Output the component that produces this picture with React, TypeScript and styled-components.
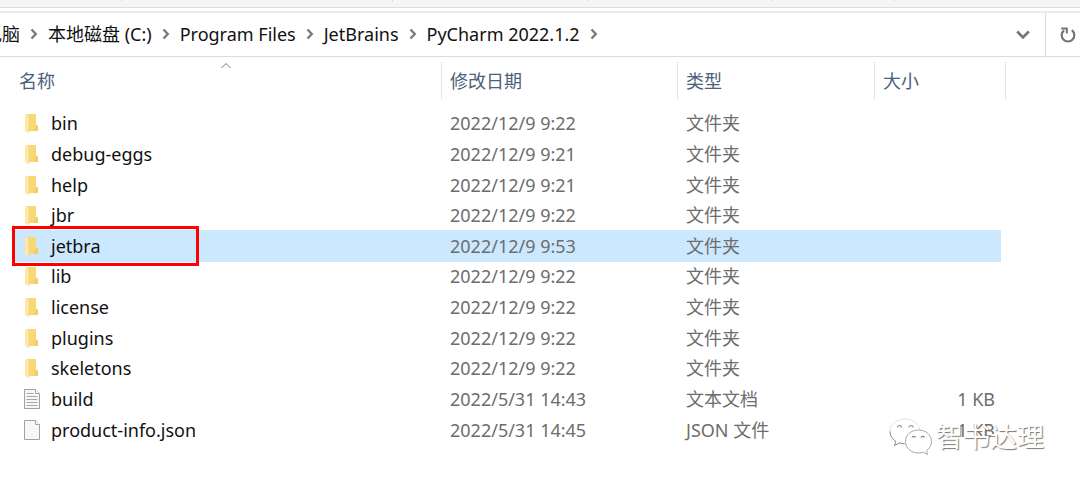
import React from "react";
import styled, { createGlobalStyle } from "styled-components";

const GlobalStyle = createGlobalStyle`
  * { box-sizing: border-box; }
  body {
    margin: 0;
    background: #fff;
    color: #111;
    font: 18px/24px "Noto Sans", "Noto Sans CJK SC", sans-serif;
  }
`;

const Window = styled.main`
  position: relative;
  overflow: hidden;
  padding-bottom: 40px;
`;

const Ribbon = styled.div`
  display: flex;
  height: 8px;
  background: #f4f5f7;
  border-bottom: 1px solid #dcdcdc;
`;

const RibbonGroup = styled.div<{ $width: number }>`
  flex: 0 0 ${(p) => p.$width}px;
  height: 2px;
  border-right: 1px solid #dcdddf;
`;

const AddressBar = styled.div`
  display: flex;
  align-items: stretch;
  height: 46px;
  margin-top: 3px;
  border-top: 2px solid #ececec;
  border-bottom: 1px solid #dadada;
`;

const Crumbs = styled.nav`
  flex: 1;
  display: flex;
  align-items: center;
  gap: 10px;
  margin-left: -16px;
  padding-bottom: 2px;
  white-space: nowrap;
`;

const Crumb = styled.a`
  color: #111;
  text-decoration: none;
`;

const IconButton = styled.button`
  display: flex;
  align-items: center;
  justify-content: center;
  width: 44px;
  padding: 0;
  border: 0;
  background: none;
  color: #757575;
`;

const RefreshButton = styled(IconButton)`
  width: 35px;
  padding-left: 10px;
  border-left: 1px solid #dadada;
`;

const FileTable = styled.table`
  width: calc(100% - 13px);
  height: 388px;
  margin-left: 13px;
  border-collapse: collapse;
  table-layout: fixed;

  th,
  td {
    padding: 0;
    text-align: left;
    font-weight: 400;
  }
`;

const HeadRow = styled.tr`
  height: 51px;
`;

const HeadCell = styled.div`
  position: relative;
  height: 37px;
  margin-bottom: 4px;
  border-right: 1px solid #e4e4e4;
`;

const SortButton = styled.button<{ $inset: number }>`
  display: block;
  width: 100%;
  height: 100%;
  padding: 0 0 0 ${(p) => p.$inset}px;
  border: 0;
  background: none;
  color: #4c607a;
  font: inherit;
  text-align: left;
`;

const SortMark = styled.svg`
  position: absolute;
  top: 0;
  left: 50%;
  margin-left: -7px;
`;

const Row = styled.tr<{ $selected: boolean }>`
  td:not(:last-child) {
    background: ${(p) => (p.$selected ? "#cce8ff" : "transparent")};
    box-shadow: ${(p) => (p.$selected ? "0 1px #cce8ff, 0 -1px #cce8ff" : "none")};
  }
`;

const FileName = styled.div`
  position: relative;
  display: flex;
  align-items: center;
  gap: 10px;
  padding-left: 10px;
`;

const MetaCell = styled.td`
  color: #6d6d6d;
`;

const Meta = styled.div<{ $align?: "right" }>`
  padding: 0 6px 0 8px;
  text-align: ${(p) => p.$align ?? "left"};
`;

const Highlight = styled.span`
  position: absolute;
  top: -8px;
  left: -1px;
  width: 187px;
  height: 40px;
  border: 3px solid #fe0000;
`;

const Watermark = styled.div`
  position: absolute;
  right: 36px;
  bottom: 28px;
  display: flex;
  align-items: center;
  gap: 4px;
  color: #fff;
  font-size: 27px;
  line-height: 40px;
  text-shadow: 1px 1px 1px #777;
`;

const Chevron = () => (
  <svg width="8" height="12" viewBox="0 0 8 12" fill="none" stroke="#7b7b7b" strokeWidth="2.4" aria-hidden>
    <path d="M1.5 1.5 5.8 6 1.5 10.5" />
  </svg>
);

const FolderIcon = () => (
  <svg width="18" height="22" viewBox="0 0 18 22" aria-hidden>
    <path d="M4 2h9v10.500l2 1.500V19H4z" fill="#f8d775" />
    <path d="M13 12.500l2 1.500V19h-4z" fill="#f1cd68" />
    <path d="M2 2 6 3.500V21L2 19z" fill="#fde9a5" />
    <path d="M6 3.500V21" stroke="#eed07c" strokeWidth=".6" />
  </svg>
);

const PageIcon = ({ lined }: { lined: boolean }) => (
  <svg width="18" height="22" viewBox="0 0 18 22" fill="none" aria-hidden>
    <path d="M1.500 1.500h11l4 4v15h-15z" fill="#f6f7f8" stroke="#a2a2a2" />
    <path d="M12.500 1.500v4h4" fill="#fff" stroke="#a2a2a2" />
    {lined && <path d="M3.500 5.500h7M3.500 8.500h11M3.500 11.500h11M3.500 14.500h11M3.500 17.500h11" stroke="#a8a8a8" />}
  </svg>
);

const WeChatLogo = () => (
  <svg width="43" height="38" viewBox="0 0 43 38" fill="#fff" stroke="#8b8b8b" aria-hidden>
    <path
      d="M16 1C7.500 1 1 6.500 1 13.500c0 4.200 2.200 7.500 5.700 9.700L5.500 27.500l5-2.500c1.800.6 3.600.8 5.500.8 8.300 0 15-5.500 15-12.300S24.500 1 16 1z"
      stroke="#e2e2e2"
    />
    <path d="M1 13.500c0 4.200 2.200 7.500 5.700 9.700L5.500 27.500l5-2.500 5 .8" />
    <path
      d="M29.500 12C22 12 16.500 17 16.500 23.500S22 35 29.500 35c1.700 0 3.200-.2 4.700-.7l4.300 2.200-1-3.800c3.200-2.200 5-5.400 5-9.200C42.500 17 37 12 29.500 12z"
      stroke="#a8a8a8"
    />
    <g fill="none" strokeWidth="1.200">
      <path d="M8.500 9.500a2 2 0 0 1 4 0M20 9.500a2 2 0 0 1 4 0M23 19.500a2 2 0 0 1 3.600 0M32 19.500a2 2 0 0 1 3.600 0" />
    </g>
  </svg>
);

type Kind = "folder" | "text" | "json";
type Entry = { name: string; date: string; kind: Kind; size?: string };

const kindLabel: Record<Kind, string> = {
  folder: "文件夹",
  text: "文本文档",
  json: "JSON 文件",
};

const entries: Entry[] = [
  { name: "bin", date: "2022/12/9 9:22", kind: "folder" },
  { name: "debug-eggs", date: "2022/12/9 9:21", kind: "folder" },
  { name: "help", date: "2022/12/9 9:21", kind: "folder" },
  { name: "jbr", date: "2022/12/9 9:22", kind: "folder" },
  { name: "jetbra", date: "2022/12/9 9:53", kind: "folder" },
  { name: "lib", date: "2022/12/9 9:22", kind: "folder" },
  { name: "license", date: "2022/12/9 9:22", kind: "folder" },
  { name: "plugins", date: "2022/12/9 9:22", kind: "folder" },
  { name: "skeletons", date: "2022/12/9 9:22", kind: "folder" },
  { name: "build", date: "2022/5/31 14:43", kind: "text", size: "1 KB" },
  { name: "product-info.json", date: "2022/5/31 14:45", kind: "json", size: "1 KB" },
];

const path = ["电脑", "本地磁盘 (C:)", "Program Files", "JetBrains", "PyCharm 2022.1.2"];
const ribbonGroups = [122, 271, 196, 184, 122];
const columnWidths = [429, 236, 197, 126, 5];
const selectedName = "jetbra";

export default function App() {
  return (
    <>
      <GlobalStyle />
      <Window>
        <Ribbon>
          {ribbonGroups.map((width, i) => (
            <RibbonGroup key={i} $width={width} />
          ))}
        </Ribbon>
        <AddressBar>
          <Crumbs aria-label="路径">
            {path.map((part) => (
              <React.Fragment key={part}>
                <Crumb href="#">{part}</Crumb>
                <Chevron />
              </React.Fragment>
            ))}
          </Crumbs>
          <IconButton aria-label="历史记录">
            <svg width="14" height="10" viewBox="0 0 14 10" fill="none" stroke="currentColor" strokeWidth="2.6">
              <path d="M1.200 1.500 7 7.300l5.800-5.800" />
            </svg>
          </IconButton>
          <RefreshButton aria-label="刷新">
            <svg width="16" height="16" viewBox="0 0 16 16" fill="none" stroke="currentColor" strokeWidth="2.200">
              <path d="M11.800 3.200A6.300 6.300 0 1 1 4 3.300" />
              <path d="M1.200 1.400h5.600v5.200" strokeWidth="2" />
            </svg>
          </RefreshButton>
        </AddressBar>
        <FileTable>
          <colgroup>
            {columnWidths.map((width, i) => (
              <col key={i} width={width} />
            ))}
            <col />
          </colgroup>
          <thead>
            <HeadRow>
              <th>
                <HeadCell>
                  <SortButton $inset={6}>名称</SortButton>
                  <SortMark width="12" height="8" viewBox="0 0 12 8" fill="none" stroke="#777">
                    <path d="M1.500 6 6 1.500 10.500 6" />
                  </SortMark>
                </HeadCell>
              </th>
              <th><HeadCell><SortButton $inset={8}>修改日期</SortButton></HeadCell></th>
              <th><HeadCell><SortButton $inset={8}>类型</SortButton></HeadCell></th>
              <th colSpan={2}><HeadCell><SortButton $inset={8}>大小</SortButton></HeadCell></th>
              <td />
            </HeadRow>
          </thead>
          <tbody>
            {entries.map(({ name, date, kind, size }) => (
              <Row key={name} $selected={name === selectedName}>
                <td>
                  <FileName>
                    {kind === "folder" ? <FolderIcon /> : <PageIcon lined={kind === "text"} />}
                    {name}
                    {name === selectedName && <Highlight />}
                  </FileName>
                </td>
                <MetaCell><Meta>{date}</Meta></MetaCell>
                <MetaCell><Meta>{kindLabel[kind]}</Meta></MetaCell>
                <MetaCell><Meta $align="right">{size}</Meta></MetaCell>
                <td colSpan={2} />
              </Row>
            ))}
          </tbody>
        </FileTable>
        <Watermark>
          <WeChatLogo />
          智书达理
        </Watermark>
      </Window>
    </>
  );
}
